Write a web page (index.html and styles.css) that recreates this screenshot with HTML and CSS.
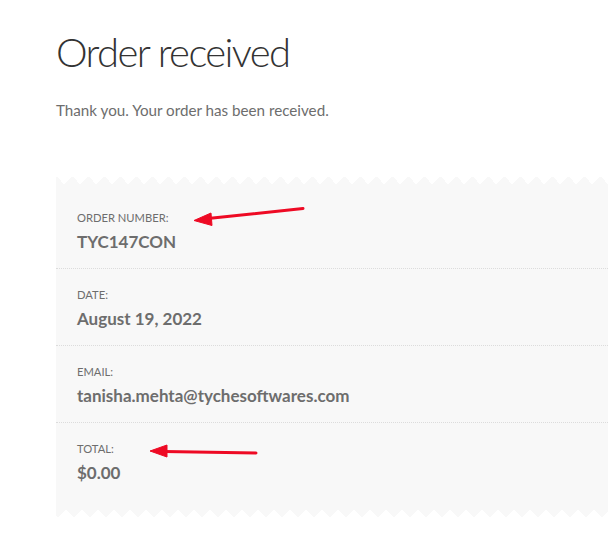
FILE: index.html
```html
<!DOCTYPE html>
<html>
<head>
<meta charset="utf-8">
<link rel="stylesheet" href="styles.css">
</head>
<body>
<main class="page">
  <h1 class="title">Order received</h1>
  <p class="thanks">Thank you. Your order has been received.</p>
  <div class="receipt">
    <ul class="details">
      <li class="row"><span class="label">Order number:</span><strong class="value">TYC147CON</strong></li>
      <li class="row"><span class="label">Date:</span><strong class="value">August 19, 2022</strong></li>
      <li class="row"><span class="label">Email:</span><strong class="value">tanisha.mehta@tychesoftwares.com</strong></li>
      <li class="row"><span class="label">Total:</span><strong class="value">$0.00</strong></li>
    </ul>
  </div>
</main>
<svg class="arrows" width="608" height="549" viewBox="0 0 608 549">
  <g fill="#ee0a24" stroke="#ee0a24">
    <line x1="303" y1="208.5" x2="208" y2="218.5" stroke-width="3" stroke-linecap="round"/>
    <polygon points="194,220.5 211,213 212,225.5" stroke-width="1" stroke-linejoin="round"/>
    <line x1="256" y1="453" x2="164" y2="451.5" stroke-width="3" stroke-linecap="round"/>
    <polygon points="150,451 167,445 167,457" stroke-width="1" stroke-linejoin="round"/>
  </g>
</svg>
</body>
</html>
```
FILE: styles.css
```css
html, body {
  margin: 0;
  padding: 0;
  background: #fff;
}
body {
  font-family: Lato, "Liberation Sans", sans-serif;
  color: #6d6d6d;
  overflow: hidden;
}
.page {
  padding: 24px 0 0 56px;
}
.title {
  margin: 0;
  font-weight: 300;
  font-size: 40px;
  line-height: 56px;
  color: #333;
  letter-spacing: -1.6px;
}
.thanks {
  margin: 18px 0 0;
  font-size: 15.2px;
  line-height: 24px;
}
.receipt {
  margin-top: 54px;
}
.receipt::before,
.receipt::after {
  content: "";
  display: block;
  height: 8px;
  background-size: 16px 8px;
  background-repeat: repeat-x;
}
.receipt::before {
  background-position: -8px 0;
  background-image: conic-gradient(from 135deg at 50% 0, #f8f8f8 90deg, transparent 0);
}
.receipt::after {
  background-position: -6px 0;
  background-image: conic-gradient(from -45deg at 50% 100%, #f8f8f8 90deg, transparent 0);
}
.details {
  list-style: none;
  margin: 0;
  padding: 8px 0 10px;
  background: #f8f8f8;
}
.row {
  display: flex;
  flex-direction: column;
  padding: 16px 21px 12px;
  border-bottom: 1px dotted #dcdcdc;
}
.row:last-child {
  border-bottom: 0;
}
.label {
  font-size: 11.2px;
  line-height: 20px;
  text-transform: uppercase;
}
.value {
  font-size: 17px;
  line-height: 28px;
  font-weight: 700;
}
.arrows {
  position: absolute;
  left: 0;
  top: 0;
  pointer-events: none;
}
```
